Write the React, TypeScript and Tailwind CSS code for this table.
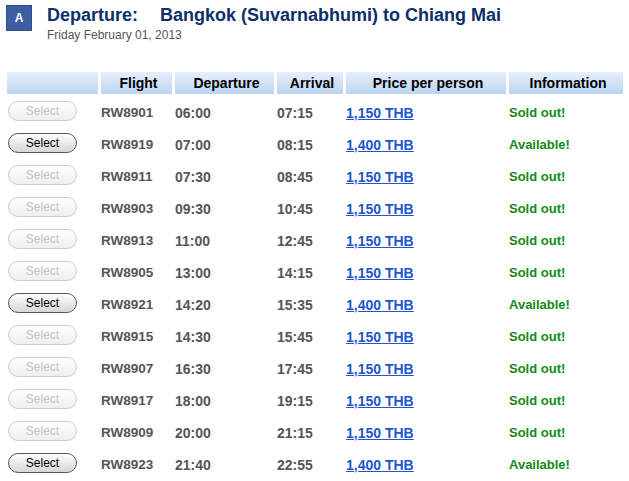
const flights = [
  { no: 'RW8901', dep: '06:00', arr: '07:15', price: '1,150 THB', open: false },
  { no: 'RW8919', dep: '07:00', arr: '08:15', price: '1,400 THB', open: true },
  { no: 'RW8911', dep: '07:30', arr: '08:45', price: '1,150 THB', open: false },
  { no: 'RW8903', dep: '09:30', arr: '10:45', price: '1,150 THB', open: false },
  { no: 'RW8913', dep: '11:00', arr: '12:45', price: '1,150 THB', open: false },
  { no: 'RW8905', dep: '13:00', arr: '14:15', price: '1,150 THB', open: false },
  { no: 'RW8921', dep: '14:20', arr: '15:35', price: '1,400 THB', open: true },
  { no: 'RW8915', dep: '14:30', arr: '15:45', price: '1,150 THB', open: false },
  { no: 'RW8907', dep: '16:30', arr: '17:45', price: '1,150 THB', open: false },
  { no: 'RW8917', dep: '18:00', arr: '19:15', price: '1,150 THB', open: false },
  { no: 'RW8909', dep: '20:00', arr: '21:15', price: '1,150 THB', open: false },
  { no: 'RW8923', dep: '21:40', arr: '22:55', price: '1,400 THB', open: true },
]

const cols = 'grid grid-cols-[91px_71px_99px_66px_160px_114px] gap-x-[3px]'

function HeadCell({ children }: { children?: React.ReactNode }) {
  return (
    <div className="h-[22px] flex items-center justify-center pl-1 bg-gradient-to-b from-[#e6f0fc] to-[#bcd5f3] text-[14px] font-bold text-black">
      {children}
    </div>
  )
}

function SelectButton({ open }: { open: boolean }) {
  return (
    <button
      disabled={!open}
      className={
        open
          ? 'ml-[1px] mb-[5px] w-[69px] h-[20px] rounded-full border border-[#5a5a5a] bg-gradient-to-b from-white to-[#d6d6d6] text-[12px] font-normal leading-none text-black'
          : 'ml-[1px] mb-[5px] w-[69px] h-[20px] rounded-full border border-[#cccccc] bg-gradient-to-b from-white to-[#eeeeee] text-[12px] font-normal leading-none text-[#c4c4c4]'
      }
    >
      Select
    </button>
  )
}

export default function App() {
  return (
    <div className="w-[629px] h-[481px] bg-white overflow-hidden font-['Liberation_Sans',Arial,sans-serif]">
      {/* Title */}
      <div className="flex pt-[5px] pl-[6px]">
        <div className="w-[26px] h-[26px] bg-[#3e5f9f] border border-[#2f4f8c] flex items-center justify-center text-white text-[12px] font-bold">
          A
        </div>
        <div className="ml-[15px]">
          <h1 className="text-[18px] leading-[20px] font-bold text-[#0c2f6b]">
            Departure:<span className="ml-[22px]">Bangkok (Suvarnabhumi) to Chiang Mai</span>
          </h1>
          <p className="mt-[3px] text-[12px] leading-[14px] text-[#555]">Friday February 01, 2013</p>
        </div>
      </div>

      {/* Flight table */}
      <div className="mt-[30px] pl-[7px]">
        <div className={cols}>
          <HeadCell />
          <HeadCell>Flight</HeadCell>
          <HeadCell>Departure</HeadCell>
          <HeadCell>Arrival</HeadCell>
          <HeadCell>Price per person</HeadCell>
          <HeadCell>Information</HeadCell>
        </div>

        <div className="mt-[3px]">
          {flights.map((f) => (
            <div key={f.no} className={`${cols} h-[32px] items-center text-[14px] font-bold text-[#555]`}>
              <div className="flex items-center">
                <SelectButton open={f.open} />
              </div>
              <div className="text-[13.5px]">{f.no}</div>
              <div>{f.dep}</div>
              <div>{f.arr}</div>
              <div>
                <a href="#" className="text-[#2255cc] underline">{f.price}</a>
              </div>
              <div className="text-[13px] text-[#118a18]">{f.open ? 'Available!' : 'Sold out!'}</div>
            </div>
          ))}
        </div>
      </div>
    </div>
  )
}
